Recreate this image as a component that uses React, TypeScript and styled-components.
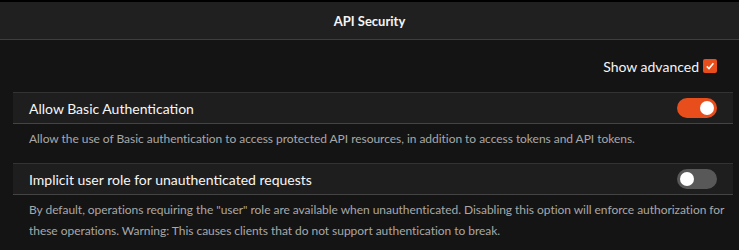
import React, { useState } from 'react';
import styled, { createGlobalStyle } from 'styled-components';

const GlobalStyle = createGlobalStyle`
  html, body {
    margin: 0;
    padding: 0;
    background: #141414;
  }
  body {
    font-family: Lato, 'Noto Sans', sans-serif;
    color: #f0f0f0;
  }
`;

const accent = '#e84e1b';

const Page = styled.div`
  border-top: 2px solid #000;
  min-height: 248px;
  background: #141414;
`;

const Header = styled.header`
  height: 37px;
  background: #202020;
  border-bottom: 1px solid #3e3e3e;
  display: flex;
  align-items: center;
  justify-content: center;
  font-size: 13px;
  font-weight: 700;
  color: #f4f4f4;
`;

const Content = styled.main`
  padding: 0 6px 0 13px;
`;

const Advanced = styled.label`
  height: 52px;
  display: flex;
  align-items: center;
  justify-content: flex-end;
  gap: 4px;
  padding-right: 16px;
  font-size: 14px;
  color: #f4f4f4;
`;

const Check = styled.span`
  width: 14px;
  height: 14px;
  border-radius: 2px;
  background: ${accent};
  display: flex;
  align-items: center;
  justify-content: center;
`;

const Row = styled.div`
  height: 30px;
  background: #1e1e1e;
  border-top: 1px solid #333;
  border-bottom: 1px solid #444;
  display: flex;
  align-items: center;
  justify-content: space-between;
  padding: 0 16px;
`;

const Title = styled.span`
  font-size: 14px;
  color: #f6f6f6;
`;

const Track = styled.button<{ $on: boolean }>`
  width: 40px;
  height: 20px;
  border: 0;
  padding: 0;
  border-radius: 10px;
  background: ${(p) => (p.$on ? accent : '#585858')};
  position: relative;
  cursor: pointer;
  &::after {
    content: '';
    position: absolute;
    top: 3px;
    left: ${(p) => (p.$on ? '23px' : '3px')};
    width: 14px;
    height: 14px;
    border-radius: 50%;
    background: #fff;
  }
`;

const Description = styled.p`
  margin: 0;
  padding: 4px 0 14px 16px;
  font-size: 12px;
  line-height: 21px;
  letter-spacing: -0.04px;
  color: #a8a8a8;
`;

const settings = [
  {
    title: 'Allow Basic Authentication',
    on: true,
    text: 'Allow the use of Basic authentication to access protected API resources, in addition to access tokens and API tokens.',
  },
  {
    title: 'Implicit user role for unauthenticated requests',
    on: false,
    text: 'By default, operations requiring the "user" role are available when unauthenticated. Disabling this option will enforce authorization for these operations. Warning: This causes clients that do not support authentication to break.',
  },
];

const Setting = ({ title, on, text }: { title: string; on: boolean; text: string }) => {
  const [value, setValue] = useState(on);
  return (
    <section>
      <Row>
        <Title>{title}</Title>
        <Track $on={value} onClick={() => setValue(!value)} aria-label={title} />
      </Row>
      <Description>{text}</Description>
    </section>
  );
};

export default function App() {
  return (
    <>
      <GlobalStyle />
      <Page>
        <Header>API Security</Header>
        <Content>
          <Advanced>
            Show advanced
            <Check>
              <svg width="10" height="10" viewBox="0 0 10 10">
                <path d="M1.8 5.4 L4 7.6 L8.4 2.2" fill="none" stroke="#fff" strokeWidth="1.6" />
              </svg>
            </Check>
          </Advanced>
          {settings.map((s) => (
            <Setting key={s.title} {...s} />
          ))}
        </Content>
      </Page>
    </>
  );
}
